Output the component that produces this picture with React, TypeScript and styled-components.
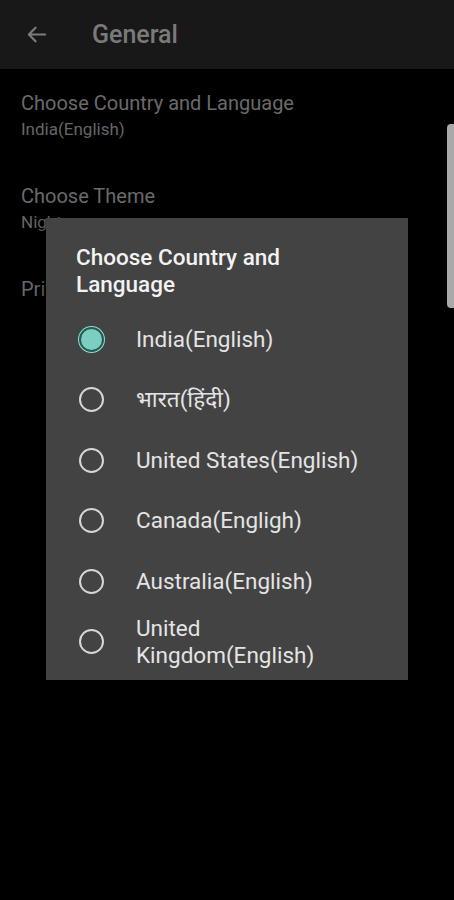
import { useState } from 'react';
import styled, { createGlobalStyle } from 'styled-components';

const GlobalStyle = createGlobalStyle`
  html, body {
    margin: 0;
    padding: 0;
    background: #000;
  }
  body {
    font-family: Roboto, 'Noto Sans', 'DejaVu Sans', sans-serif;
  }
`;

const options = [
  'India(English)',
  'भारत(हिंदी)',
  'United States(English)',
  'Canada(Engligh)',
  'Australia(English)',
  'United Kingdom(English)',
];

const settings = [
  { title: 'Choose Country and Language', value: 'India(English)' },
  { title: 'Choose Theme', value: 'Night' },
  { title: 'Privacy Policy', value: '' },
];

export default function App() {
  const [selected, setSelected] = useState(0);

  return (
    <>
      <GlobalStyle />
      <Screen>
        <TopBar>
          <BackButton>
            <svg width="23" height="23" viewBox="0 0 24 24" fill="none">
              <path
                d="M21 12H4M11 5l-7 7 7 7"
                stroke="#7c7c7c"
                strokeWidth="2.3"
                strokeLinecap="round"
                strokeLinejoin="round"
              />
            </svg>
          </BackButton>
          <Title>General</Title>
        </TopBar>
        <List>
          {settings.map(s => (
            <Setting key={s.title}>
              <SettingTitle>{s.title}</SettingTitle>
              {s.value && <SettingValue>{s.value}</SettingValue>}
            </Setting>
          ))}
        </List>
        <ScrollThumb />
        <Dialog>
          <DialogTitle>Choose Country and Language</DialogTitle>
          <Options>
            {options.map((opt, idx) => (
              <Option key={opt} onClick={() => setSelected(idx)}>
                <Radio checked={selected === idx} />
                <OptionLabel>{opt}</OptionLabel>
              </Option>
            ))}
          </Options>
        </Dialog>
      </Screen>
    </>
  );
}

const Screen = styled.div`
  position: relative;
  width: 454px;
  height: 900px;
  background: #000;
  overflow: hidden;
`;

const TopBar = styled.div`
  height: 69px;
  background: #181818;
  display: flex;
  align-items: center;
  padding-left: 24px;
  box-sizing: border-box;
`;

const BackButton = styled.div`
  width: 24px;
  height: 24px;
  display: flex;
  align-items: center;
  justify-content: center;
  margin-right: 44px;
`;

const Title = styled.div`
  font-size: 25px;
  font-weight: 500;
  color: #7a7a7a;
`;

const List = styled.div`
  display: flex;
  flex-direction: column;
  padding: 21px 21px 0;
  gap: 43px;
`;

const Setting = styled.div`
  display: flex;
  flex-direction: column;
  gap: 2px;
`;

const SettingTitle = styled.div`
  font-size: 20px;
  color: #6a6a6a;
  line-height: 26px;
`;

const SettingValue = styled.div`
  font-size: 17px;
  color: #666;
  line-height: 22px;
`;

const ScrollThumb = styled.div`
  position: absolute;
  right: 0;
  top: 124px;
  width: 7px;
  height: 184px;
  background: #a9a9a9;
  border-radius: 4px 0 0 4px;
`;

const Dialog = styled.div`
  position: absolute;
  left: 46px;
  top: 218px;
  width: 362px;
  height: 462px;
  background: #434343;
  box-shadow: 0 4px 14px rgba(0, 0, 0, 0.6);
  box-sizing: border-box;
  padding: 26px 30px 0;
`;

const DialogTitle = styled.div`
  font-size: 22.5px;
  font-weight: 500;
  color: #f2f2f2;
  line-height: 27px;
  width: 240px;
`;

const Options = styled.div`
  display: flex;
  flex-direction: column;
  margin-top: 11px;
`;

const Option = styled.div`
  display: flex;
  align-items: center;
  min-height: 60.5px;
  cursor: pointer;
`;

const Radio = styled.span<{ checked: boolean }>`
  flex: none;
  width: 25px;
  height: 25px;
  box-sizing: border-box;
  border-radius: 50%;
  margin-left: 3px;
  margin-right: 32px;
  border: 2px solid ${p => (p.checked ? '#1f5b53' : '#d6d6d6')};
  background: ${p => (p.checked ? '#7ccfc0' : 'transparent')};
  box-shadow: ${p => (p.checked ? '0 0 0 1px #9ad8cc' : 'none')};
`;

const OptionLabel = styled.span`
  font-size: 22.5px;
  color: #e4e4e4;
  line-height: 27px;
  max-width: 232px;
`;
